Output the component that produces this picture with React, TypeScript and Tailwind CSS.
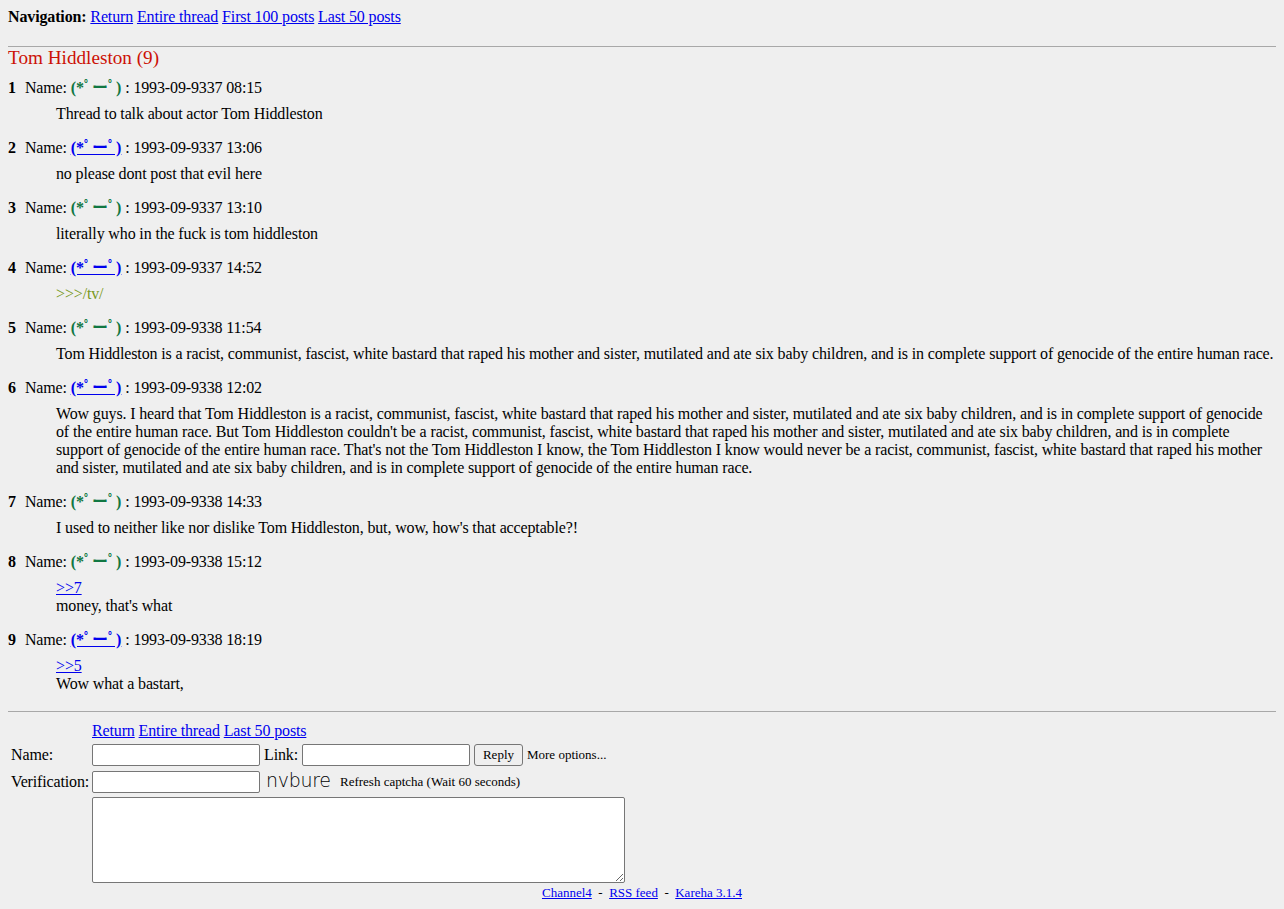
const serif = "font-['Liberation_Serif','Noto_Sans_CJK_JP',serif]";

interface Post {
  num: number;
  linked: boolean;
  date: string;
  body: React.ReactNode;
}

const Link = ({ children, className = "" }: { children: React.ReactNode; className?: string }) => (
  <a href="#" className={`text-[#0000ee] underline ${className}`}>
    {children}
  </a>
);

const posts: Post[] = [
  { num: 1, linked: false, date: "1993-09-9337 08:15", body: "Thread to talk about actor Tom Hiddleston" },
  { num: 2, linked: true, date: "1993-09-9337 13:06", body: "no please dont post that evil here" },
  { num: 3, linked: false, date: "1993-09-9337 13:10", body: "literally who in the fuck is tom hiddleston" },
  {
    num: 4,
    linked: true,
    date: "1993-09-9337 14:52",
    body: <span className="text-[#789922]">&gt;&gt;&gt;/tv/</span>,
  },
  {
    num: 5,
    linked: false,
    date: "1993-09-9338 11:54",
    body: "Tom Hiddleston is a racist, communist, fascist, white bastard that raped his mother and sister, mutilated and ate six baby children, and is in complete support of genocide of the entire human race.",
  },
  {
    num: 6,
    linked: true,
    date: "1993-09-9338 12:02",
    body: "Wow guys. I heard that Tom Hiddleston is a racist, communist, fascist, white bastard that raped his mother and sister, mutilated and ate six baby children, and is in complete support of genocide of the entire human race. But Tom Hiddleston couldn't be a racist, communist, fascist, white bastard that raped his mother and sister, mutilated and ate six baby children, and is in complete support of genocide of the entire human race. That's not the Tom Hiddleston I know, the Tom Hiddleston I know would never be a racist, communist, fascist, white bastard that raped his mother and sister, mutilated and ate six baby children, and is in complete support of genocide of the entire human race.",
  },
  {
    num: 7,
    linked: false,
    date: "1993-09-9338 14:33",
    body: "I used to neither like nor dislike Tom Hiddleston, but, wow, how's that acceptable?!",
  },
  {
    num: 8,
    linked: false,
    date: "1993-09-9338 15:12",
    body: (
      <>
        <Link>&gt;&gt;7</Link>
        <br />
        money, that's what
      </>
    ),
  },
  {
    num: 9,
    linked: true,
    date: "1993-09-9338 18:19",
    body: (
      <>
        <Link>&gt;&gt;5</Link>
        <br />
        Wow what a bastart,
      </>
    ),
  },
];

const PostItem = ({ post }: { post: Post }) => (
  <div className="mb-[15px]">
    <div className="leading-[20px] h-[20px]">
      <span className="font-bold">{post.num}</span>
      <span className="ml-[9px]">Name: </span>
      {post.linked ? (
        <a href="#" className="font-bold text-[#0000ee] underline tracking-normal">
          (*ﾟーﾟ)
        </a>
      ) : (
        <span className="font-bold text-[#117743] tracking-normal">(*ﾟーﾟ)</span>
      )}
      <span> : {post.date}</span>
    </div>
    <div className="pl-[48px] mt-[7px] leading-[18px]">{post.body}</div>
  </div>
);

export default function App() {
  return (
    <div className={`${serif} min-h-screen bg-[#efefef] p-2 text-[16px] tracking-[-0.14px] text-black`}>
      <div className="leading-[18px]">
        <b>Navigation:</b> <Link>Return</Link> <Link>Entire thread</Link> <Link>First 100 posts</Link>{" "}
        <Link>Last 50 posts</Link>
      </div>

      <div className="mt-[20px] border-t border-[#a8a8a8]" />

      <h2 className="text-[19.2px] leading-[22px] tracking-normal text-[#cc1105]">Tom Hiddleston (9)</h2>

      <div className="mt-[9px]">
        {posts.map((p) => (
          <PostItem key={p.num} post={p} />
        ))}
      </div>

      <div className="mt-[18px] border-t border-[#a8a8a8]" />

      <div className="mt-[10px] pl-[84px] leading-[18px]">
        <Link>Return</Link> <Link>Entire thread</Link> <Link>Last 50 posts</Link>
      </div>

      <div className="mt-[4px] flex items-center h-[22px]">
        <span className="w-[84px] shrink-0 pl-[3px]">Name:</span>
        <input className="w-[168px] h-[22px] bg-white border border-[#767676] rounded-[2px]" />
        <span className="mx-[4px]">Link:</span>
        <input className="w-[168px] h-[22px] bg-white border border-[#767676] rounded-[2px]" />
        <button className="ml-[4px] w-[49px] h-[22px] text-[13px] tracking-normal bg-[#efefef] border border-[#767676] rounded-[3px]">
          Reply
        </button>
        <span className="ml-[4px] text-[13px] tracking-normal">More options...</span>
      </div>

      <div className="mt-[5px] flex items-center h-[22px]">
        <span className="w-[84px] shrink-0 pl-[3px] whitespace-nowrap">Verification:</span>
        <input className="w-[168px] h-[22px] bg-white border border-[#767676] rounded-[2px]" />
        <span className="ml-[6px] w-[70px] font-['DejaVu_Sans',sans-serif] font-extralight text-[19px] leading-[16px] tracking-[-0.3px] -mt-[5px] text-black">
          nvbure
        </span>
        <span className="ml-[4px] text-[13px] tracking-normal">Refresh captcha (Wait 60 seconds)</span>
      </div>

      <div className="mt-[4px] pl-[84px]">
        <textarea className="block w-[533px] h-[86px] bg-white border border-[#767676] rounded-[2px]" />
      </div>

      <div className="mt-[2px] text-center text-[13px] leading-[15px] tracking-normal">
        <Link>Channel4</Link> &nbsp;-&nbsp; <Link>RSS feed</Link> &nbsp;-&nbsp; <Link>Kareha 3.1.4</Link>
      </div>
    </div>
  );
}
